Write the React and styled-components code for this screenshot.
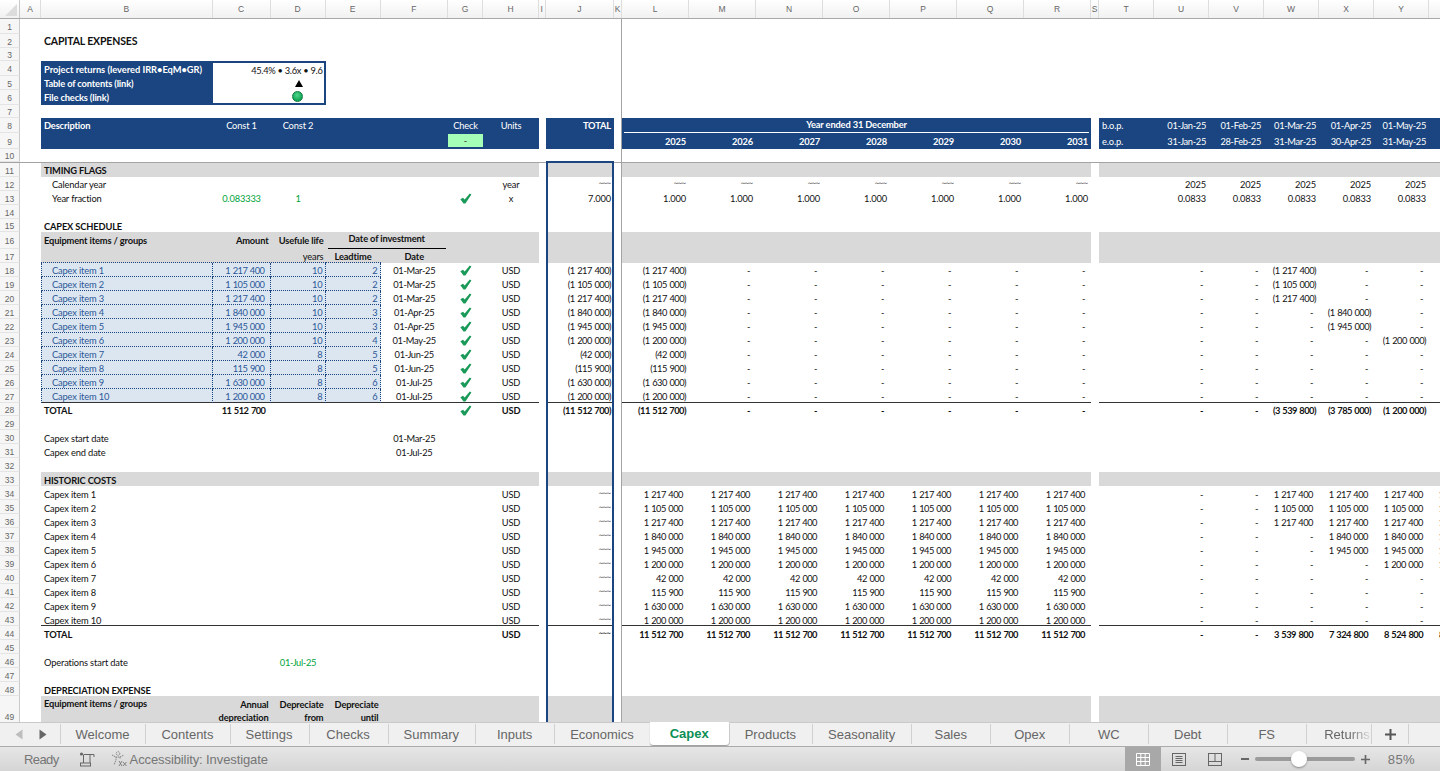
import React from 'react';
import styled, { createGlobalStyle } from 'styled-components';

const NAVY = '#1a4580';
const BAND = '#d9d9d9';
const INPUT = '#dce6f1';
const INPUT_TEXT = '#2b5797';
const GREEN = '#00a33b';

const LETTERS = 'ABCDEFGHIJKLMNOPQRSTUVWXYZ'.split('');
const WIDTHS = {
  A: 21, B: 171.5, C: 58, D: 55, E: 55, F: 67.5, G: 35, H: 56, I: 6.5, J: 68.5, K: 8,
  L: 67, M: 67, N: 67, O: 67, P: 67, Q: 67, R: 67, S: 8,
  T: 55, U: 55, V: 55, W: 55, X: 55, Y: 55, Z: 55,
};
const TEMPLATE = `20px ${LETTERS.map((l) => `${WIDTHS[l]}px`).join(' ')}`;
const YEAR_COLS = 'LMNOPQR'.split('');
const MONTH_COLS = 'UVWXYZ'.split('');
const FILLED = 'BCDEFGHJLMNOPQRTUVWXYZ'.split('');

const GlobalStyle = createGlobalStyle`
  html, body { margin: 0; padding: 0; background: #fff; overflow: hidden; }
  * { box-sizing: border-box; }
`;

const Window = styled.div`
  display: flex;
  flex-direction: column;
  width: 1440px;
  height: 771px;
  overflow: hidden;
  font-family: Lato, "Open Sans", sans-serif;
  font-size: 9.3px;
  letter-spacing: -0.15px;
  color: #111;
`;

const ColumnBar = styled.div`
  display: grid;
  grid-template-columns: ${TEMPLATE};
  flex: 0 0 19px;
  background: linear-gradient(#fff, #f1f1f1);
  border-bottom: 1px solid #a9a9a9;
`;

const Corner = styled.div`
  position: relative;
  border-right: 1px solid #c9c9c9;

  &::after {
    content: '';
    position: absolute;
    right: 2px;
    bottom: 2px;
    border-style: solid;
    border-width: 0 0 12px 12px;
    border-color: transparent transparent #dcdcdc transparent;
  }
`;

const ColumnLetter = styled.div`
  display: flex;
  align-items: center;
  justify-content: center;
  border-right: 1px solid #dedede;
  font-family: "Liberation Sans", sans-serif;
  font-size: 8.5px;
  letter-spacing: 0;
  color: #666;
`;

const Sheet = styled.div`
  flex: 0 0 703px;
  overflow: hidden;
`;

const Row = styled.div`
  display: grid;
  grid-template-columns: ${TEMPLATE};
  grid-template-rows: 100%;
  height: ${({ $h }) => $h}px;
  border-bottom: ${({ $freeze }) => ($freeze ? '1px solid #a3a3a3' : '0')};
`;

const RowHead = styled.div`
  display: flex;
  align-items: ${({ $tall }) => ($tall ? 'flex-end' : 'center')};
  justify-content: center;
  background: #f6f6f6;
  border-right: 1px solid #c9c9c9;
  border-bottom: 1px solid #e4e4e4;
  font-family: "Liberation Sans", sans-serif;
  font-size: 8.5px;
  letter-spacing: 0;
  line-height: 13px;
  padding-top: 3px;
  padding-bottom: ${({ $tall }) => ($tall ? '1px' : '0')};
  color: #666;
`;

const justify = { l: 'flex-start', c: 'center', r: 'flex-end' };

const Cell = styled.div`
  display: flex;
  align-items: ${({ $top }) => ($top ? 'flex-start' : 'center')};
  justify-content: ${({ $a }) => justify[$a || 'l']};
  grid-column: span ${({ $span }) => $span || 1};
  min-width: 0;
  white-space: nowrap;
  padding: ${({ $pt }) => $pt}px ${({ $pr }) => $pr || 0}px 0 ${({ $pl }) => $pl || 0}px;
  font-size: ${({ $fs }) => ($fs ? `${$fs}px` : 'inherit')};
  font-weight: ${({ $b }) => ($b ? 700 : 400)};
  letter-spacing: ${({ $ls }) => ($ls !== undefined ? `${$ls}px` : 'inherit')};
  word-spacing: ${({ $ws }) => $ws || 0}px;
  color: ${({ $c }) => $c || 'inherit'};
  background-color: ${({ $bg }) => $bg || 'transparent'};
  background-image: ${({ $dots }) =>
    $dots ? `linear-gradient(90deg, ${NAVY} 1px, transparent 1px)` : 'none'};
  background-size: 2px 1px;
  background-repeat: repeat-x;
  background-position: left bottom;
  border-top: ${({ $bt }) => $bt || '0'};
  border-bottom: ${({ $bb }) => $bb || '0'};
  border-left: ${({ $bl }) => $bl || '0'};
  border-right: ${({ $brd }) => $brd || '0'};
  box-shadow: ${({ $line }) => ($line ? 'inset 0 -1px 0 #333' : 'none')};
  margin-bottom: ${({ $mb }) => $mb || 0}px;
  line-height: 13px;
`;

const Tilde = styled.span`
  font-family: "DejaVu Sans", sans-serif;
  font-size: 6px;
  letter-spacing: -1.2px;
  padding-right: 1px;
  transform: translateY(-2px);
`;

const RuledLabel = styled.div`
  flex: 1;
  align-self: stretch;
  margin: 0 ${({ $mx }) => $mx}px;
  text-align: center;
  border-bottom: 1px solid ${({ $line }) => $line};
  line-height: 14px;
`;

const WrappedRight = styled.div`
  text-align: right;
  padding-top: 1px;
`;

const Dot = styled.div`
  width: 11px;
  height: 11px;
  border-radius: 50%;
  border: 1px solid #0e7a3e;
  background: radial-gradient(circle at 45% 35%, #4fd68a, #12a555 70%);
`;

const Triangle = styled.div`
  width: 0;
  height: 0;
  border-left: 4px solid transparent;
  border-right: 4px solid transparent;
  border-bottom: 7px solid #000;
`;

const Tabs = styled.div`
  display: flex;
  flex: 0 0 25px;
  align-items: stretch;
  background: #f0f0f0;
  border-top: 1px solid #c9c9c9;
  border-bottom: 1px solid #ababab;
  font-family: "Liberation Sans", Arial, sans-serif;
  font-size: 13px;
  letter-spacing: 0;
  color: #666;
`;

const TabArrows = styled.div`
  display: flex;
  flex: 0 0 59.5px;
  align-items: center;
  gap: 16px;
  padding-left: 15px;
`;

const Tab = styled.div`
  display: flex;
  align-items: center;
  justify-content: center;
  min-width: 79px;
  padding: 0 16px;
  position: relative;

  &::before {
    content: '';
    position: absolute;
    left: 0;
    top: 1px;
    height: 20px;
    border-left: 1px solid #d0d0d0;
  }
`;

const ActiveTab = styled(Tab)`
  height: 23px;
  margin-top: -1px;
  background: #fff;
  border-radius: 0 0 3px 3px;
  box-shadow: 0 1px 1px #9a9a9a;
  color: #0b8f55;
  font-weight: 700;
  z-index: 1;

  &::before {
    display: none;
  }
`;

const FadedTab = styled(Tab)`
  flex: 0 0 65px;
  min-width: 0;
  padding: 0 0 0 18px;
  justify-content: flex-start;
  overflow: hidden;
`;

const FadedText = styled.span`
  -webkit-mask-image: linear-gradient(90deg, #000 55%, rgba(0, 0, 0, 0.15) 100%);
  mask-image: linear-gradient(90deg, #000 55%, rgba(0, 0, 0, 0.15) 100%);
`;

const PlusTab = styled(Tab)`
  flex: 0 0 38px;
  min-width: 0;
  padding: 0;
  border-right: 0;

  &::after {
    content: '';
    position: absolute;
    right: 0;
    top: 1px;
    height: 20px;
    border-right: 1px solid #d0d0d0;
  }
`;

const Status = styled.div`
  display: flex;
  flex: 0 0 24px;
  align-items: center;
  padding: 0 25px 0 24px;
  background: linear-gradient(#e6e6e6, #d5d5d5);
  font-family: "Liberation Sans", Arial, sans-serif;
  font-size: 13px;
  letter-spacing: 0;
  color: #767676;
`;

const Ready = styled.span`
  margin-right: 20px;
  letter-spacing: -0.6px;
`;

const Access = styled.span`
  margin-left: 16px;
  display: flex;
  align-items: center;
  gap: 3px;
  letter-spacing: -0.1px;
`;

const Spacer = styled.div`
  flex: 1;
`;

const ViewButton = styled.div`
  display: flex;
  align-items: center;
  justify-content: center;
  width: 36px;
  height: 24px;
  background: ${({ $on }) => ($on ? '#a8a8a8' : 'transparent')};
`;

const MinusMark = styled.div`
  width: 8px;
  height: 2px;
  margin-left: 8px;
  background: #666;
`;

const Slider = styled.div`
  position: relative;
  width: 100px;
  height: 4px;
  margin: 0 6px;
  border-radius: 2px;
  background: #9b9b9b;
`;

const Thumb = styled.div`
  position: absolute;
  left: 36px;
  top: -6px;
  width: 16px;
  height: 16px;
  border-radius: 50%;
  background: #fff;
  box-shadow: 0 1px 2px #888;
`;

const Zoom = styled.span`
  margin-left: 18px;
  letter-spacing: 0.4px;
`;

const Check = () => (
  <svg width="12" height="11" viewBox="0 0 12 11">
    <path d="M0.4 6.3 L3 4.7 L4.7 6.6 L9.8 0.4 L11.4 1.5 L5.4 10.4 L3.5 10.4 Z" fill="#1a9a58" />
  </svg>
);

const ArrowLeft = () => (
  <svg width="8" height="11" viewBox="0 0 8 11"><path d="M7.5 0.5 V10.5 L0.5 5.5 Z" fill="#bdbdbd" /></svg>
);

const ArrowRight = () => (
  <svg width="8" height="11" viewBox="0 0 8 11"><path d="M0.5 0.5 V10.5 L7.5 5.5 Z" fill="#666" /></svg>
);

const PlusIcon = ({ size = 11, color = '#555' }) => (
  <svg width={size} height={size} viewBox="0 0 11 11">
    <path d="M5.5 0 V11 M0 5.5 H11" stroke={color} strokeWidth="2" />
  </svg>
);

const MacroIcon = () => (
  <svg width="16" height="15" viewBox="0 0 16 15" fill="none" stroke="#666">
    <circle cx="2.5" cy="2" r="1.6" fill="#666" stroke="none" />
    <path d="M5 2.5 H15 V5 M4.5 2.5 V11 M11 2.5 V11" />
    <rect x="1.5" y="11" width="10" height="3" />
  </svg>
);

const AccessIcon = () => (
  <svg width="16" height="16" viewBox="0 0 16 16" fill="none" stroke="#777" strokeWidth="0.9">
    <circle cx="7" cy="2.5" r="1.8" strokeDasharray="1.2 0.7" />
    <path d="M1 4 L5 6 H9 L13 4 M5 6 V9 L3 14 M9 6 V8" strokeDasharray="1.4 0.7" />
    <path d="M8 10 L11 15 M11 10 L8 15 M12 11 L15.5 15 M15.5 11 L12 15" />
  </svg>
);

const GridIcon = () => (
  <svg width="14" height="13" viewBox="0 0 14 13" fill="none" stroke="#fff">
    <path d="M0.5 0.5 H13.5 V12.5 H0.5 Z M0.5 4.5 H13.5 M0.5 8.5 H13.5 M4.8 0.5 V12.5 M9.2 0.5 V12.5" />
  </svg>
);

const PageIcon = () => (
  <svg width="14" height="13" viewBox="0 0 14 13" fill="none" stroke="#666">
    <rect x="0.5" y="0.5" width="13" height="12" />
    <path d="M3.5 3.5 H10.5 M3.5 5.5 H10.5 M3.5 7.5 H10.5 M3.5 9.5 H10.5" />
  </svg>
);

const BreakIcon = () => (
  <svg width="14" height="13" viewBox="0 0 14 13" fill="none" stroke="#666">
    <rect x="0.5" y="0.5" width="13" height="12" />
    <path d="M0.5 8.5 H13.5 M7 0.5 V8.5" />
  </svg>
);

const tilde = { t: <Tilde>~~~</Tilde>, a: 'r', pr: 3 };

const money = (t, extra) => ({
  t,
  a: 'r',
  pr: t[0] === '(' ? 3 : 6,
  ls: -0.52,
  ws: 0.7,
  ...extra,
});

const dateText = (t, extra) => ({ t, ls: -0.32, ...extra });

const centered = (t, extra) => ({ t, a: 'c', ...extra });

const checkCell = () => ({ t: <Check />, a: 'c', pt: 1 });

const fillCols = (cols, make) => Object.fromEntries(cols.map((c, i) => [c, make(c, i)]));

const ITEMS = [
  ['1 217 400', 10, 2, '01-Mar-25', 'W'],
  ['1 105 000', 10, 2, '01-Mar-25', 'W'],
  ['1 217 400', 10, 2, '01-Mar-25', 'W'],
  ['1 840 000', 10, 3, '01-Apr-25', 'X'],
  ['1 945 000', 10, 3, '01-Apr-25', 'X'],
  ['1 200 000', 10, 4, '01-May-25', 'Y'],
  ['42 000', 8, 5, '01-Jun-25', 'Z'],
  ['115 900', 8, 5, '01-Jun-25', 'Z'],
  ['1 630 000', 8, 6, '01-Jul-25', null],
  ['1 200 000', 8, 6, '01-Jul-25', null],
];

const DOTTED = `1px dotted ${NAVY}`;

const headerDates = [
  ['01-Jan-25', '31-Jan-25'],
  ['01-Feb-25', '28-Feb-25'],
  ['01-Mar-25', '31-Mar-25'],
  ['01-Apr-25', '30-Apr-25'],
  ['01-May-25', '31-May-25'],
  ['01-Jun-25', '30-Jun-25'],
];

const onNavy = (t, extra) => ({ t, c: '#fff', ...extra });

const boxLabel = (t, extra) => ({
  t,
  b: true,
  pl: 3,
  c: '#fff',
  bg: NAVY,
  ...extra,
});

const boxValue = (t, edge) => ({
  t,
  span: 2,
  bg: '#fff',
  brd: `2px solid ${NAVY}`,
  bt: edge === 'top' ? `2px solid ${NAVY}` : undefined,
  bb: edge === 'bottom' ? `2px solid ${NAVY}` : undefined,
  ...(typeof t === 'string' ? { a: 'r', pr: 1, ls: -0.3 } : { a: 'r', pr: 21 }),
});

const capexRow = (item, i) => {
  const [amount, life, lead, date, month] = item;
  const inputCell = (t, extra) => ({
    t,
    a: 'r',
    c: INPUT_TEXT,
    bg: INPUT,
    brd: DOTTED,
    dots: i !== 9,
    pt: 1,
    ...extra,
  });
  const neg = `(${amount})`;
  return {
    n: 18 + i,
    line: i === 9,
    cells: {
      B: inputCell(`Capex item ${i + 1}`, { a: 'l', pl: 10, bl: DOTTED }),
      C: inputCell(amount, { pr: 5, ls: -0.52, ws: 0.7 }),
      D: inputCell(String(life), { pr: 2 }),
      E: inputCell(String(lead), { pr: 2 }),
      F: dateText(date, { a: 'c', pt: 1 }),
      G: checkCell(),
      H: centered('USD', { pt: 1 }),
      J: money(neg, { pr: 1, pt: 1 }),
      L: money(neg, { pt: 1 }),
      ...fillCols(YEAR_COLS.slice(1), () => money('-', { pt: 1 })),
      ...fillCols(MONTH_COLS, (c) => (c === month ? money(neg, { pt: 1 }) : money('-', { pt: 1 }))),
    },
  };
};

const historicRow = (item, i) => {
  const [amount, , , , month] = item;
  const startIdx = MONTH_COLS.indexOf(month);
  return {
    n: 34 + i,
    line: i === 9,
    cells: {
      B: { t: `Capex item ${i + 1}`, pl: 3 },
      H: centered('USD'),
      J: { ...tilde, pr: 1 },
      ...fillCols(YEAR_COLS, () => money(amount)),
      ...fillCols(MONTH_COLS, (c, idx) => (startIdx >= 0 && idx >= startIdx ? money(amount) : money('-'))),
    },
  };
};

const boldFrom = (cells) =>
  Object.fromEntries(Object.entries(cells).map(([k, v]) => [k, { ...v, b: true }]));

const ROWS = [
  { n: 1, h: 15 },
  { n: 2, pt: 0, cells: { B: { t: 'CAPITAL EXPENSES', b: true, pl: 3, fs: 10.5 } } },
  { n: 3, h: 13 },
  {
    n: 4,
    h: 15,
    pt: 1,
    cells: {
      B: boxLabel('Project returns (levered IRR•EqM•GR)', { ls: -0.03 }),
      C: boxValue('45.4% • 3.6x • 9.6', 'top'),
    },
  },
  { n: 5, pt: 1, cells: { B: boxLabel('Table of contents (link)'), C: boxValue(<Triangle />) } },
  { n: 6, h: 15, pt: 0, cells: { B: boxLabel('File checks (link)'), C: boxValue(<Dot />, 'bottom') } },
  { n: 7, h: 13 },
  {
    n: 8,
    h: 15,
    pt: 0,
    band: NAVY,
    cells: {
      B: onNavy('Description', { b: true, pl: 3 }),
      C: onNavy('Const 1', { a: 'c' }),
      D: onNavy('Const 2', { a: 'c' }),
      G: onNavy('Check', { a: 'c' }),
      H: onNavy('Units', { a: 'c' }),
      J: onNavy('TOTAL', { a: 'r', b: true, pr: 3 }),
      L: onNavy(<RuledLabel $mx={2} $line="#fff">Year ended 31 December</RuledLabel>, {
        b: true,
        span: 7,
        top: true,
      }),
      T: onNavy('b.o.p.', { pl: 3 }),
      ...fillCols(MONTH_COLS, (c, i) => dateText(headerDates[i][0], { c: '#fff', a: 'r', pr: 3 })),
    },
  },
  {
    n: 9,
    h: 16,
    pt: 0,
    band: NAVY,
    cells: {
      G: { t: '-', a: 'c', bg: '#a6ffb6', c: '#333', bt: `1px solid ${NAVY}`, bb: `2px solid ${NAVY}` },
      ...fillCols(YEAR_COLS, (c, i) => onNavy(String(2025 + i), { a: 'r', b: true, pr: 3 })),
      T: onNavy('e.o.p.', { pl: 3 }),
      ...fillCols(MONTH_COLS, (c, i) => dateText(headerDates[i][1], { c: '#fff', a: 'r', pr: 3 })),
    },
  },
  { n: 10, freeze: true, cells: { J: { bb: `2px solid ${NAVY}`, mb: -1 } } },
  { n: 11, pt: 0, band: BAND, frame: true, cells: { B: { t: 'TIMING FLAGS', b: true, pl: 3 } } },
  {
    n: 12,
    pt: 0,
    frame: true,
    cells: {
      B: { t: 'Calendar year', pl: 11 },
      H: centered('year'),
      J: { ...tilde, pr: 1 },
      ...fillCols(YEAR_COLS, () => tilde),
      ...fillCols(MONTH_COLS, () => ({ t: '2025', a: 'r', pr: 3 })),
    },
  },
  {
    n: 13,
    pt: 0,
    frame: true,
    cells: {
      B: { t: 'Year fraction', pl: 11 },
      C: centered('0.083333', { c: GREEN }),
      D: centered('1', { c: GREEN }),
      G: centered(<Check />),
      H: centered('x'),
      J: { t: '7.000', a: 'r', pr: 1 },
      ...fillCols(YEAR_COLS, () => ({ t: '1.000', a: 'r', pr: 3 })),
      ...fillCols(MONTH_COLS, () => ({ t: '0.0833', a: 'r', pr: 3 })),
    },
  },
  { n: 14, frame: true },
  { n: 15, h: 13, pt: 2, frame: true, cells: { B: { t: 'CAPEX SCHEDULE', b: true, pl: 3 } } },
  {
    n: 16,
    h: 17,
    pt: 0,
    band: BAND,
    frame: true,
    cells: {
      B: { t: 'Equipment items / groups', b: true, pl: 3 },
      C: { t: 'Amount', b: true, a: 'r', pr: 2 },
      D: { t: 'Usefule life', b: true, a: 'r', pr: 2 },
      E: {
        t: <RuledLabel $mx={2} $line="#000">Date of investment</RuledLabel>,
        b: true,
        span: 2,
        top: true,
      },
    },
  },
  {
    n: 17,
    pt: 0,
    band: BAND,
    frame: true,
    cells: {
      B: { dots: true },
      C: { dots: true },
      D: { t: 'years', a: 'r', pr: 2, dots: true },
      E: { t: 'Leadtime', b: true, a: 'c', dots: true },
      F: { t: 'Date', b: true, a: 'c' },
    },
  },
  ...ITEMS.map((item, i) => ({ ...capexRow(item, i), frame: true })),
  {
    n: 28,
    h: 13,
    pt: 2,
    frame: true,
    cells: boldFrom({
      B: { t: 'TOTAL', pl: 3 },
      C: money('11 512 700', { pr: 5 }),
      G: checkCell(),
      H: centered('USD'),
      J: money('(11 512 700)', { pr: 1 }),
      L: money('(11 512 700)'),
      ...fillCols(YEAR_COLS.slice(1), () => money('-')),
      U: money('-'),
      V: money('-'),
      W: money('(3 539 800)'),
      X: money('(3 785 000)'),
      Y: money('(1 200 000)'),
      Z: money('(157 900)'),
    }),
  },
  { n: 29, frame: true },
  {
    n: 30,
    frame: true,
    cells: { B: { t: 'Capex start date', pl: 3 }, F: dateText('01-Mar-25', { a: 'c' }) },
  },
  {
    n: 31,
    frame: true,
    cells: { B: { t: 'Capex end date', pl: 3 }, F: dateText('01-Jul-25', { a: 'c' }) },
  },
  { n: 32, frame: true },
  { n: 33, band: BAND, frame: true, cells: { B: { t: 'HISTORIC COSTS', b: true, pl: 3 } } },
  ...ITEMS.map((item, i) => ({ ...historicRow(item, i), frame: true })),
  {
    n: 44,
    frame: true,
    cells: boldFrom({
      B: { t: 'TOTAL', pl: 3 },
      H: centered('USD'),
      J: { ...tilde, pr: 1 },
      ...fillCols(YEAR_COLS, () => money('11 512 700')),
      U: money('-'),
      V: money('-'),
      W: money('3 539 800'),
      X: money('7 324 800'),
      Y: money('8 524 800'),
      Z: money('8 682 700'),
    }),
  },
  { n: 45, frame: true },
  {
    n: 46,
    frame: true,
    cells: { B: { t: 'Operations start date', pl: 3 }, D: dateText('01-Jul-25', { a: 'c', c: GREEN }) },
  },
  { n: 47, frame: true },
  { n: 48, frame: true, cells: { B: { t: 'DEPRECIATION EXPENSE', b: true, pl: 3 } } },
  {
    n: 49,
    h: 30,
    pt: 1,
    tall: true,
    band: BAND,
    frame: true,
    cells: {
      B: { t: 'Equipment items / groups', b: true, pl: 3, top: true },
      C: { t: <div>Annual<br />depreciation</div>, b: true, a: 'r', pr: 2, top: true, right: true },
      D: { t: <div>Depreciate<br />from</div>, b: true, a: 'r', pr: 2, top: true, right: true },
      E: { t: <div>Depreciate<br />until</div>, b: true, a: 'r', pr: 2, top: true, right: true },
    },
  },
];

function SheetRow({ row }) {
  const { n, h = 14, pt = 3, band, line, frame, freeze, tall, cells = {} } = row;
  const out = [];
  let skip = 0;
  LETTERS.forEach((col) => {
    if (skip > 0) {
      skip -= 1;
      return;
    }
    const spec = cells[col] || {};
    const span = spec.span || 1;
    skip = span - 1;
    const filled = FILLED.includes(col);
    const frameBorder = col === 'J' && frame ? `2px solid ${NAVY}` : undefined;
    out.push(
      <Cell
        key={col}
        $a={spec.a}
        $pt={spec.pt !== undefined ? spec.pt : pt}
        $pr={spec.pr}
        $pl={spec.pl}
        $b={spec.b}
        $c={spec.c}
        $fs={spec.fs}
        $ls={spec.ls}
        $ws={spec.ws}
        $top={spec.top}
        $span={span}
        $mb={spec.mb}
        $dots={spec.dots}
        $bg={spec.bg || (filled && band) || undefined}
        $bt={spec.bt}
        $bb={spec.bb}
        $line={filled && line}
        $bl={spec.bl || frameBorder}
        $brd={spec.brd || frameBorder || (col === 'K' ? '1px solid #a3a3a3' : undefined)}
      >
        {spec.right ? <WrappedRight>{spec.t}</WrappedRight> : spec.t}
      </Cell>,
    );
  });
  return (
    <Row $h={h} $freeze={freeze}>
      <RowHead $tall={tall}>{n}</RowHead>
      {out}
    </Row>
  );
}

const TAB_NAMES = ['Welcome', 'Contents', 'Settings', 'Checks', 'Summary', 'Inputs', 'Economics'];
const TAB_NAMES_AFTER = ['Products', 'Seasonality', 'Sales', 'Opex', 'WC', 'Debt', 'FS'];

export default function App() {
  return (
    <Window>
      <GlobalStyle />
      <ColumnBar>
        <Corner />
        {LETTERS.map((l) => (
          <ColumnLetter key={l}>{l}</ColumnLetter>
        ))}
      </ColumnBar>
      <Sheet>
        {ROWS.map((row) => (
          <SheetRow key={row.n} row={row} />
        ))}
      </Sheet>
      <Tabs>
        <TabArrows>
          <ArrowLeft />
          <ArrowRight />
        </TabArrows>
        {TAB_NAMES.map((name) => (
          <Tab key={name}>{name}</Tab>
        ))}
        <ActiveTab>Capex</ActiveTab>
        {TAB_NAMES_AFTER.map((name) => (
          <Tab key={name}>{name}</Tab>
        ))}
        <FadedTab>
          <FadedText>Returns</FadedText>
        </FadedTab>
        <PlusTab>
          <PlusIcon />
        </PlusTab>
      </Tabs>
      <Status>
        <Ready>Ready</Ready>
        <MacroIcon />
        <Access>
          <AccessIcon />
          Accessibility: Investigate
        </Access>
        <Spacer />
        <ViewButton $on>
          <GridIcon />
        </ViewButton>
        <ViewButton>
          <PageIcon />
        </ViewButton>
        <ViewButton>
          <BreakIcon />
        </ViewButton>
        <MinusMark />
        <Slider>
          <Thumb />
        </Slider>
        <PlusIcon size={9} color="#666" />
        <Zoom>85%</Zoom>
      </Status>
    </Window>
  );
}
